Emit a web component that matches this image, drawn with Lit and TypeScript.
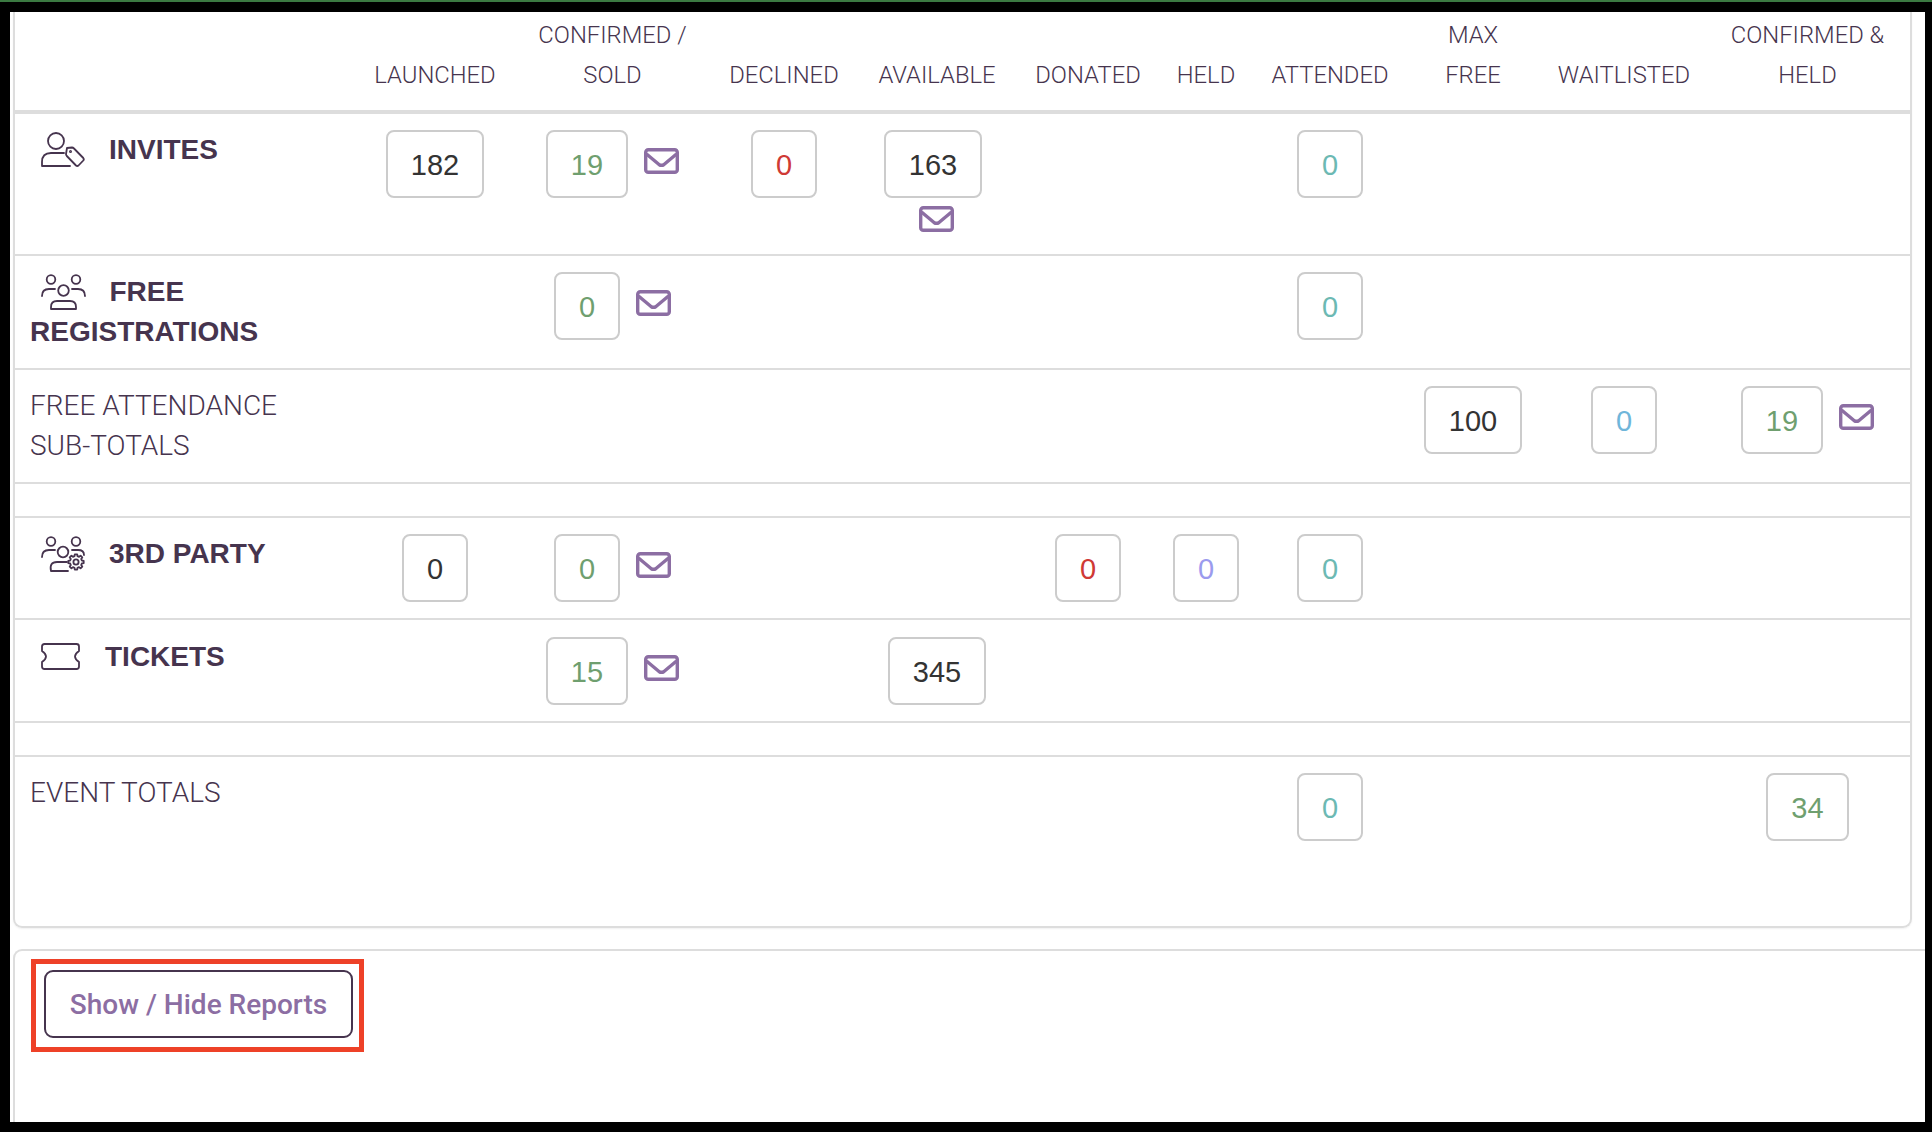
import { LitElement, html, css, svg, nothing } from "lit";
import { customElement } from "lit/decorators.js";

const gearPath = (cx: number, cy: number, ro: number, ri: number, n: number) => {
  const pts: string[] = [];
  const step = (Math.PI * 2) / n;
  for (let i = 0; i < n; i++) {
    const a = i * step;
    const p = [
      [a - step * 0.2, ro],
      [a + step * 0.2, ro],
      [a + step * 0.32, ri],
      [a + step * 0.68, ri],
    ];
    for (const [t, r] of p) pts.push(`${(cx + Math.cos(t) * r).toFixed(2)} ${(cy + Math.sin(t) * r).toFixed(2)}`);
  }
  return "M" + pts.join("L") + "Z";
};

const ICONS: Record<string, any> = {
  invite: svg`<circle cx="15" cy="9" r="8"/><path d="M1 34 V30 Q1 21 10 21 H23 M1 34 H29"/><path d="M26 16 L31 15.5 Q32 15.5 33 16.5 L42.3 26 Q43.3 27.2 42.3 28.5 L37.5 33.5 Q36.2 34.5 35 33.5 L25.8 24 Q25 23 25 22 Z"/><circle cx="29.5" cy="19.5" r=".6"/>`,
  free: svg`<circle cx="10" cy="5.5" r="4.3"/><circle cx="35" cy="5.5" r="4.3"/><circle cx="22.5" cy="16.5" r="5.3"/><path d="M10 35 V33 Q10 27 16 27 H29 Q35 27 35 33 V35 Z"/><path d="M1 22 Q1 15 8 15 H14 M44 22 Q44 15 37 15 H31"/>`,
  party: svg`<circle cx="10" cy="5.5" r="4.3"/><circle cx="35" cy="5.5" r="4.3"/><circle cx="22" cy="16" r="5.3"/><path d="M10 35 Q8 26 16 26 H26 M10 35 H27"/><path d="M1 21 Q1 14 8 14 H14 M31 14 H37 Q43 14 43 19"/><path d="${gearPath(35, 26, 7.8, 6, 8)}"/><circle cx="35" cy="26" r="2.6"/>`,
  ticket: svg`<path d="M3.5 1 H35.5 Q38 1 38 3.5 V8 Q30 13.5 38 19 V23.5 Q38 26 35.5 26 H3.5 Q1 26 1 23.5 V19 Q9 13.5 1 8 V3.5 Q1 1 3.5 1 Z"/>`,
};

const icon = (name: string) => {
  const box: Record<string, [number, number]> = {
    invite: [44, 36],
    free: [45, 37],
    party: [45, 37],
    ticket: [39, 27],
  };
  const [w, h] = box[name];
  return html`<svg class="ico ${name}" width=${w} height=${h} viewBox="0 0 ${w} ${h}">${ICONS[name]}</svg>`;
};

const mail = html`<svg class="mail" width="35" height="26" viewBox="0 0 35 26"><rect x="1.7" y="1.7" width="31.6" height="22.6" rx="2.6"/><path d="M2.5 6 L15 16.5 Q17.5 18.2 20 16.5 L32.5 6"/></svg>`;

type Cell = { v: string; c?: string; m?: boolean; under?: boolean } | null;
const num = (v: string, c = "", m = false, under = false): Cell => ({ v, c, m, under });
const blank = (n: number): Cell[] => Array(n).fill(null);

const renderCell = (cell: Cell) => {
  if (!cell) return html`<td></td>`;
  if (cell.under)
    return html`<td><div class="stack"><span class="box shift ${cell.c}">${cell.v}</span>${mail}</div></td>`;
  return html`<td><div class="pair"><span class="box ${cell.c}">${cell.v}</span>${cell.m ? mail : nothing}</div></td>`;
};

@customElement("app-root")
export class AppRoot extends LitElement {
  static styles = css`
    :host {
      display: block;
      height: 1132px;
      box-sizing: border-box;
      background: #000;
      border-top: 2.5px solid #3b7a42;
      padding: 9.5px 7px 10px 10px;
      font-family: Roboto, "Liberation Sans", sans-serif;
      color: #46344e;
      overflow: hidden;
    }
    .page {
      background: #fff;
      height: 1110px;
      padding-left: 3px;
      display: flex;
      flex-direction: column;
      gap: 21px;
    }
    .card {
      margin-right: 13px;
      height: 916px;
      box-sizing: border-box;
      border: 2px solid #ddd;
      border-top: none;
      border-radius: 0 0 9px 9px;
      box-shadow: 0 1px 2px rgba(0, 0, 0, 0.06);
    }
    table {
      table-layout: fixed;
      width: 1897px;
      border-collapse: separate;
      border-spacing: 0;
    }
    th {
      height: 102px;
      box-sizing: border-box;
      vertical-align: bottom;
      text-align: center;
      font-weight: 300;
      font-size: 23.8px;
      line-height: 39.4px;
      padding: 0 0 14.5px;
      border-bottom: 4px solid #ddd;
    }
    td {
      vertical-align: top;
      padding: 16.5px 0 0;
      box-sizing: border-box;
      border-bottom: 2px solid #ddd;
    }
    tr.last td {
      border-bottom: none;
    }
    tr.gap td {
      padding: 0;
    }
    td.label {
      padding-left: 15px;
      font-weight: 300;
      line-height: 40px;
      font-size: 28px;
    }
    td.head {
      font-family: "Liberation Sans", Arial, sans-serif;
      font-weight: 700;
      font-size: 28px;
    }
    .ico {
      fill: none;
      stroke: #46344e;
      stroke-width: 1.8;
      stroke-linejoin: round;
      stroke-linecap: round;
      vertical-align: top;
      margin: 2px 0 0 11px;
    }
    .ico.invite {
      margin-right: 24px;
    }
    .ico.free {
      margin-right: 23.5px;
    }
    .ico.party {
      margin-right: 23px;
    }
    .ico.ticket {
      margin: 6px 25px 0 11px;
    }
    .pair {
      display: flex;
      justify-content: center;
      align-items: flex-start;
      gap: 16px;
    }
    .stack {
      display: flex;
      flex-direction: column;
      align-items: center;
      gap: 8px;
    }
    .stack .mail {
      margin-right: 2px;
    }
    .box {
      box-sizing: border-box;
      height: 68px;
      padding: 0 23px;
      border: 2px solid #ccc;
      border-radius: 8px;
      font-family: "Liberation Sans", Arial, sans-serif;
      font-size: 29px;
      line-height: 66px;
      color: #333;
      text-align: center;
    }
    .shift {
      margin-right: 8px;
    }
    .green { color: #6f9f6f; }
    .red { color: #cf3a35; }
    .teal { color: #6cb9b3; }
    .blue { color: #6fb6da; }
    .peri { color: #9b9bee; }
    .mail {
      fill: none;
      stroke: #8c6ea3;
      stroke-width: 3.4;
      stroke-linejoin: round;
      flex: none;
    }
    .pair .mail {
      margin-top: 18px;
    }
    .panel {
      flex: 1;
      min-height: 0;
      box-sizing: border-box;
      border: 2px solid #ddd;
      border-width: 2px 0 0 2px;
      border-radius: 9px 0 0 0;
      padding: 8px 0 0 16px;
    }
    .mark {
      width: 333px;
      height: 93px;
      box-sizing: border-box;
      border: 5px solid #ee4128;
      padding: 6.5px 8px;
    }
    button {
      display: block;
      width: 309px;
      height: 68px;
      box-sizing: border-box;
      background: #fff;
      border: 2px solid #46344e;
      border-radius: 9px;
      font-family: Roboto, sans-serif;
      font-weight: 500;
      font-size: 28px;
      color: #8c6ea3;
      padding: 0;
    }
  `;

  render() {
    const widths = [347, 146, 209, 134, 172, 130, 106, 142, 144, 158, 209];
    const heads = [
      "",
      "LAUNCHED",
      html`CONFIRMED /<br />SOLD`,
      "DECLINED",
      "AVAILABLE",
      "DONATED",
      "HELD",
      "ATTENDED",
      html`MAX<br />FREE`,
      "WAITLISTED",
      html`CONFIRMED &amp;<br />HELD`,
    ];
    return html`
      <div class="page">
        <div class="card">
          <table>
            <colgroup>${widths.map((w) => html`<col style="width:${w}px" />`)}</colgroup>
            <thead>
              <tr>${heads.map((h) => html`<th>${h}</th>`)}</tr>
            </thead>
            <tbody>
              <tr style="height:142px">
                <td class="label head">${icon("invite")}INVITES</td>
                ${[
                  num("182"),
                  num("19", "green", true),
                  num("0", "red"),
                  num("163", "", false, true),
                  null,
                  null,
                  num("0", "teal"),
                  ...blank(3),
                ].map(renderCell)}
              </tr>
              <tr style="height:114px">
                <td class="label head">${icon("free")}FREE<br />REGISTRATIONS</td>
                ${[null, num("0", "green", true), ...blank(4), num("0", "teal"), ...blank(3)].map(renderCell)}
              </tr>
              <tr style="height:114px">
                <td class="label">FREE ATTENDANCE<br />SUB-TOTALS</td>
                ${[...blank(7), num("100"), num("0", "blue"), num("19", "green", true)].map(renderCell)}
              </tr>
              <tr class="gap" style="height:34px"><td colspan="11"></td></tr>
              <tr style="height:102.5px">
                <td class="label head">${icon("party")}3RD PARTY</td>
                ${[
                  num("0"),
                  num("0", "green", true),
                  null,
                  null,
                  num("0", "red"),
                  num("0", "peri"),
                  num("0", "teal"),
                  ...blank(3),
                ].map(renderCell)}
              </tr>
              <tr style="height:102.5px">
                <td class="label head">${icon("ticket")}TICKETS</td>
                ${[null, num("15", "green", true), null, num("345"), ...blank(6)].map(renderCell)}
              </tr>
              <tr class="gap" style="height:34px"><td colspan="11"></td></tr>
              <tr class="last" style="height:168px">
                <td class="label">EVENT TOTALS</td>
                ${[...blank(6), num("0", "teal"), null, null, num("34", "green")].map(renderCell)}
              </tr>
            </tbody>
          </table>
        </div>
        <div class="panel">
          <div class="mark"><button>Show / Hide Reports</button></div>
        </div>
      </div>
    `;
  }
}
